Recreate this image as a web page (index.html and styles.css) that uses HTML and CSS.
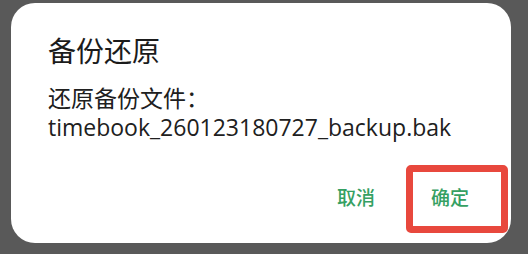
FILE: index.html
```html
<!doctype html>
<html>
<head>
<meta charset="utf-8">
<title>备份还原</title>
<link rel="stylesheet" href="styles.css">
</head>
<body>
	<div class="dialog">
		<div class="dialog-title">备份还原</div>
		<div class="dialog-msg">
			<p>还原备份文件：</p>
			<p>timebook_260123180727_backup.bak</p>
		</div>
		<div class="dialog-btns">
			<span class="btn">取消</span>
			<span class="btn btn-ok">确定<i class="mark"></i></span>
		</div>
	</div>
</body>
</html>
```

FILE: styles.css
```css
*{ margin:0; padding:0;}
body{
	background:#595959;
	font-family:"Open Sans","Noto Sans CJK SC",sans-serif;
	overflow:hidden;
}
.dialog{
	width:500px;
	height:240px;
	margin:3px 0 0 11px;
	background:#fff;
	border-radius:24px;
	padding:29px 29px 0 37px;
	box-sizing:border-box;
}
.dialog-title{
	font-family:"Noto Sans CJK SC",sans-serif;
	font-size:28px;
	line-height:36px;
	color:#1b1b1b;
}
.dialog-msg{
	margin-top:16px;
	font-size:23px;
	line-height:29px;
	color:#202020;
}
.dialog-btns{
	display:flex;
	justify-content:flex-end;
	gap:30px;
	margin-top:35px;
}
.btn{
	width:64px;
	height:40px;
	line-height:40px;
	text-align:center;
	font-family:"Noto Sans CJK SC",sans-serif;
	font-size:19px;
	font-weight:500;
	color:#35a062;
}
.btn-ok{
	position:relative;
}
/* 标注框 */
.mark{
	position:absolute;
	left:-12px;
	top:-12px;
	width:88px;
	height:54px;
	border:7px solid #e8483d;
	border-radius:5px;
}
```
